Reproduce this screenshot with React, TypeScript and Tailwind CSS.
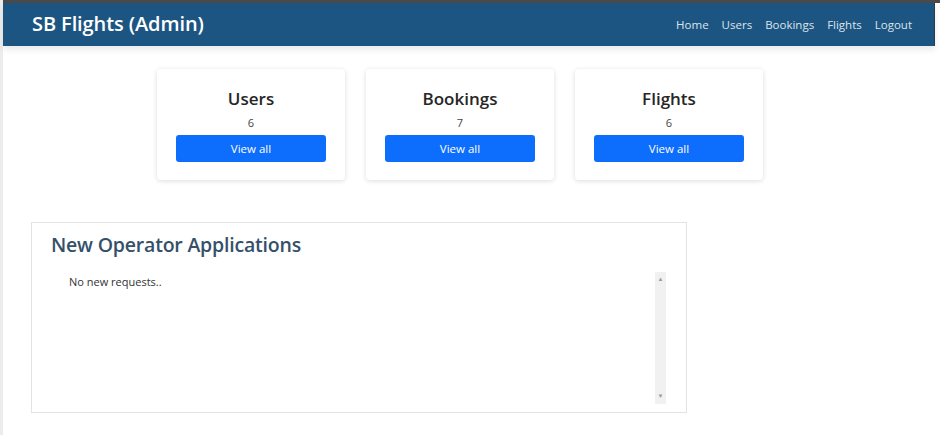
const stats = [
  { title: "Users", count: 6 },
  { title: "Bookings", count: 7 },
  { title: "Flights", count: 6 },
];

const links = ["Home", "Users", "Bookings", "Flights", "Logout"];

export default function App() {
  return (
    <div
      className="w-[940px] h-[435px] overflow-hidden bg-white flex"
      style={{ fontFamily: '"Open Sans", "Noto Sans", sans-serif' }}
    >
      <div className="w-[3px] bg-[#ececec] shrink-0" />
      <div className="flex-1 flex flex-col">
        <div className="h-[3px] bg-[#4a4a4a]" />
        <nav className="h-[43px] bg-[#1d5582] flex items-center justify-between pl-[29px] pr-[22px] mr-[5px] border-r border-[#2a3b4a] shadow-[0_4px_6px_rgba(0,0,0,0.08)]">
          <span className="text-white text-[20px] font-semibold tracking-[-0.1px] pb-[2px]">
            SB Flights (Admin)
          </span>
          <div className="flex gap-[13px] text-[11.5px] text-[#dbe4ec]">
            {links.map((l) => (
              <span key={l}>{l}</span>
            ))}
          </div>
        </nav>

        <div className="flex gap-[21px] ml-[154px] mt-[23px]">
          {stats.map((s) => (
            <div
              key={s.title}
              className="w-[188px] h-[111px] rounded-[4px] bg-white shadow-[0_1px_5px_rgba(0,0,0,0.14)] flex flex-col items-center pt-[19px]"
            >
              <div className="text-[17px] font-semibold text-[#262626] leading-[22px]">{s.title}</div>
              <div className="text-[11px] text-[#444] mt-[6px] leading-[14px]">{s.count}</div>
              <button className="mt-[5px] w-[150px] h-[27px] rounded-[3px] bg-[#0d6efd] text-white text-[11.5px]">
                View all
              </button>
            </div>
          ))}
        </div>

        <div className="ml-[28px] mt-[42px] w-[656px] h-[191px] border border-[#e3e3e3] flex flex-col">
          <h2 className="text-[19.5px] font-semibold text-[#34506a] ml-[19px] mt-[9px] leading-[26px] tracking-[-0.2px]">
            New Operator Applications
          </h2>
          <div className="flex flex-1 mt-[14px] mb-[8px] ml-[37px] mr-[20px]">
            <div className="flex-1 text-[11px] text-[#333] pt-[2px]">No new requests..</div>
            <div className="w-[11px] bg-[#f1f1f1] flex flex-col justify-between items-center py-[3px] text-[6px] text-[#999]">
              <span>▲</span>
              <span>▼</span>
            </div>
          </div>
        </div>
      </div>
    </div>
  );
}
